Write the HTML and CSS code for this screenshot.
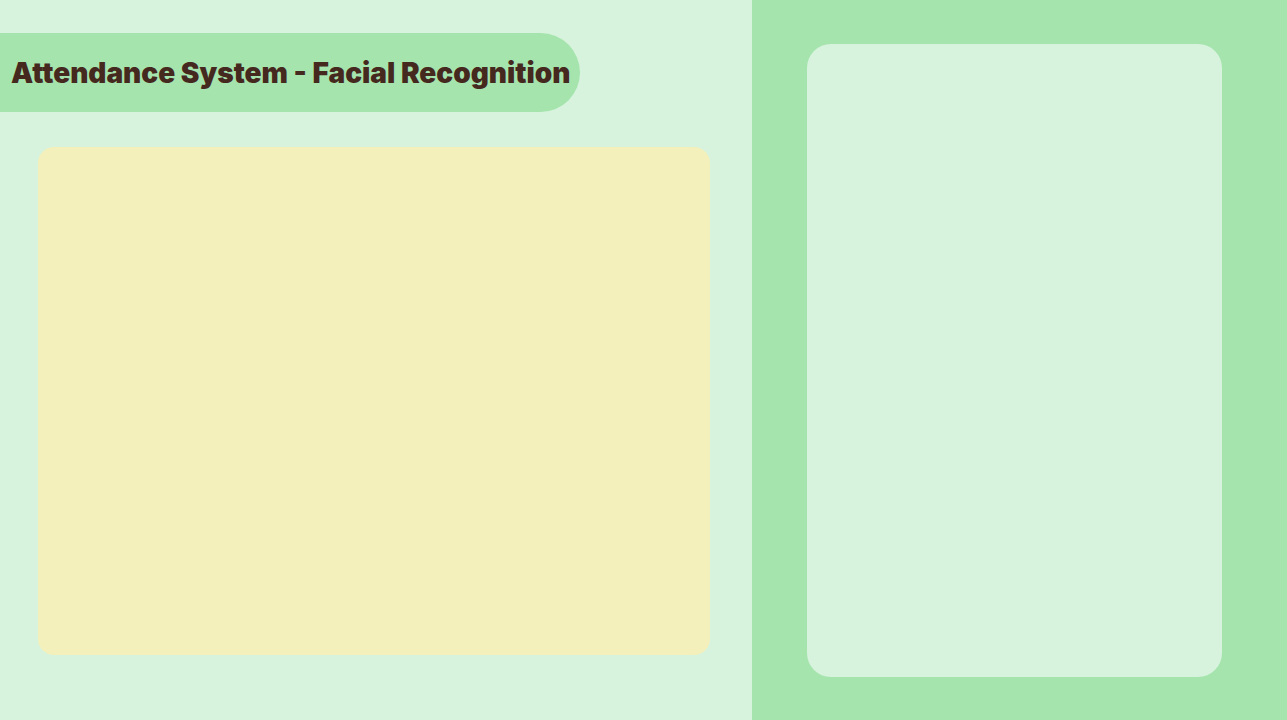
FILE: index.html
```html
<!DOCTYPE html>
<html lang="en">
<head>
<meta charset="utf-8">
<title>Attendance System - Facial Recognition</title>
<link rel="stylesheet" href="styles.css">
</head>
<body>
<div class="app">
  <main class="main">
    <header class="title-pill">
      <h1 class="title">Attendance System - Facial Recognition</h1>
    </header>
    <section class="camera-box"></section>
  </main>
  <aside class="sidebar">
    <div class="side-card"></div>
  </aside>
</div>
</body>
</html>
```

FILE: styles.css
```css
* { box-sizing: border-box; }
html, body { margin: 0; padding: 0; }
body {
  font-family: Inter, "Noto Sans", sans-serif;
  background: #d7f3dd;
}
.app {
  display: grid;
  grid-template-columns: 752px 535px;
  width: 1287px;
  height: 720px;
}
.main {
  background: #d7f3dd;
  display: flex;
  flex-direction: column;
  align-items: flex-start;
  padding-top: 33px;
}
.title-pill {
  width: 580px;
  height: 79px;
  background: #a5e4ad;
  border-radius: 0 40px 40px 0;
  display: flex;
  align-items: center;
  padding-left: 11px;
}
.title {
  margin: 0;
  font-size: 28px;
  font-weight: 900;
  color: #45281e;
  white-space: nowrap;
  letter-spacing: 0;
}
.camera-box {
  margin-top: 35px;
  margin-left: 38px;
  width: 672px;
  height: 508px;
  background: #f3f0bb;
  border-radius: 16px;
}
.sidebar {
  background: #a5e4ad;
  padding: 44px 0 0 55px;
}
.side-card {
  width: 415px;
  height: 633px;
  background: #d7f3dd;
  border-radius: 24px;
}
```
